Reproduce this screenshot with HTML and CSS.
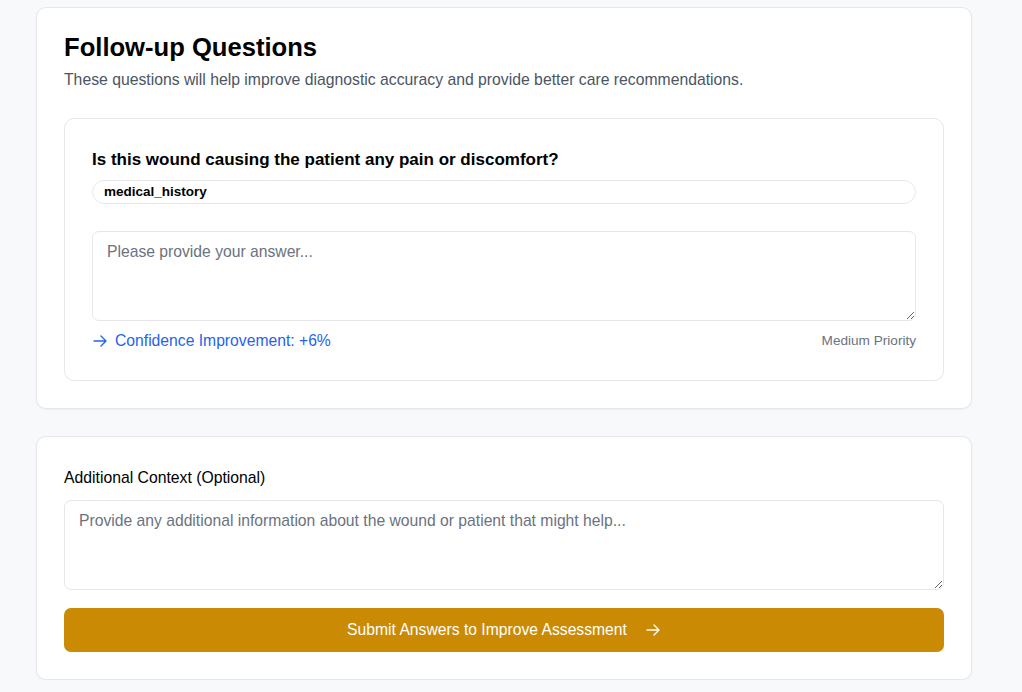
FILE: index.html
```html
<!DOCTYPE html>
<html lang="en">
<head>
<meta charset="utf-8">
<title>Follow-up Questions</title>
<link rel="stylesheet" href="styles.css">
</head>
<body>
<main class="page">
  <section class="card">
    <h2 class="title">Follow-up Questions</h2>
    <p class="subtitle">These questions will help improve diagnostic accuracy and provide better care recommendations.</p>

    <div class="question">
      <h3 class="question-text">Is this wound causing the patient any pain or discomfort?</h3>
      <div class="tag">medical_history</div>
      <textarea class="answer" placeholder="Please provide your answer..."></textarea>
      <div class="meta">
        <span class="confidence">
          <svg class="icon" viewBox="0 0 24 24" fill="none" stroke="currentColor" stroke-width="2" stroke-linecap="round" stroke-linejoin="round"><path d="M13.5 4.5 21 12m0 0-7.5 7.5M21 12H3"/></svg>
          Confidence Improvement: +6%
        </span>
        <span class="priority">Medium Priority</span>
      </div>
    </div>
  </section>

  <section class="card">
    <label class="label" for="ctx">Additional Context (Optional)</label>
    <textarea id="ctx" class="answer" placeholder="Provide any additional information about the wound or patient that might help..."></textarea>
    <button class="submit" type="button">
      <span>Submit Answers to Improve Assessment</span>
      <svg class="icon" viewBox="0 0 24 24" fill="none" stroke="currentColor" stroke-width="2" stroke-linecap="round" stroke-linejoin="round"><path d="M13.5 4.5 21 12m0 0-7.5 7.5M21 12H3"/></svg>
    </button>
  </section>
</main>
</body>
</html>
```

FILE: styles.css
```css
* {
  box-sizing: border-box;
}

html, body {
  margin: 0;
  padding: 0;
}

body {
  background: #f8f9fb;
  font-family: "Liberation Sans", Arial, sans-serif;
  color: #111;
}

.page {
  width: 936px;
  margin-left: 36px;
  padding-top: 7px;
  display: flex;
  flex-direction: column;
  gap: 27px;
}

.card {
  background: #fff;
  border: 1px solid #e5e7eb;
  border-radius: 10px;
  padding: 27px;
  box-shadow: 0 1px 2px rgba(0, 0, 0, 0.04);
  display: flex;
  flex-direction: column;
}

.title {
  margin: 0;
  font-size: 25.6px;
  line-height: 24px;
  font-weight: 700;
  color: #000;
}

.subtitle {
  margin: 9px 0 0;
  font-size: 15.75px;
  line-height: 24px;
  color: #4b5563;
}

.question {
  margin-top: 26px;
  border: 1px solid #e5e7eb;
  border-radius: 10px;
  padding: 27px;
  display: flex;
  flex-direction: column;
}

.question-text {
  margin: 0;
  font-size: 17px;
  line-height: 27px;
  font-weight: 700;
  color: #000;
}

.tag {
  margin-top: 7px;
  border: 1px solid #e5e7eb;
  border-radius: 999px;
  padding: 0 11px;
  font-size: 13.5px;
  line-height: 22px;
  font-weight: 700;
  color: #000;
}

.answer {
  display: block;
  width: 100%;
  height: 90px;
  border: 1px solid #e5e7eb;
  border-radius: 7px;
  padding: 11px 14px;
  font-family: "Liberation Sans", Arial, sans-serif;
  font-size: 15.7px;
  color: #111;
  background: #fff;
  resize: vertical;
  outline: none;
}

.answer::placeholder {
  color: #6b7280;
}

.question .answer {
  margin-top: 27px;
}

.meta {
  margin-top: 8px;
  display: flex;
  justify-content: space-between;
  align-items: center;
  line-height: 24px;
}

.confidence {
  display: flex;
  align-items: center;
  gap: 7px;
  color: #2563eb;
  font-size: 15.7px;
}

.icon {
  width: 16px;
  height: 16px;
  flex: none;
}

.priority {
  font-size: 13.6px;
  color: #6b7280;
}

.label {
  display: block;
  font-size: 15.75px;
  line-height: 28px;
  color: #000;
}

.card > .answer {
  margin-top: 8px;
}

.submit {
  margin-top: 18px;
  height: 44px;
  width: 100%;
  border: none;
  border-radius: 7px;
  background: #ca8a04;
  color: #fff;
  font-family: "Liberation Sans", Arial, sans-serif;
  font-size: 15.7px;
  display: flex;
  align-items: center;
  justify-content: center;
  gap: 18px;
  cursor: pointer;
}
```
